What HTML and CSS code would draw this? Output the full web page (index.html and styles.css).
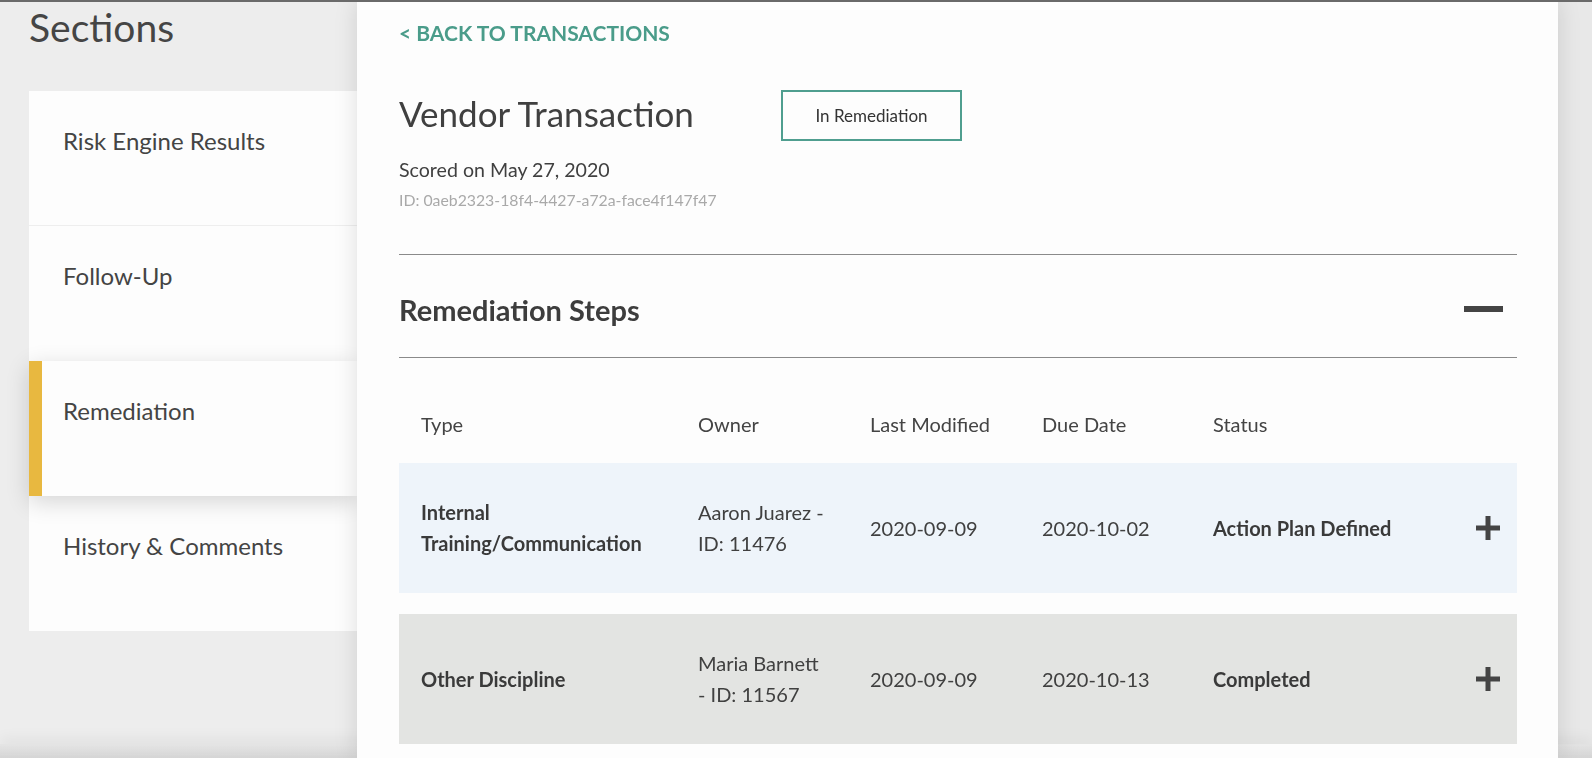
FILE: index.html
```html
<!DOCTYPE html>
<html lang="en">
<head>
<meta charset="utf-8">
<title>Vendor Transaction</title>
<link rel="stylesheet" href="styles.css">
</head>
<body>
<div class="page">
  <aside class="sidebar">
    <h2 class="sidebar-title">Sections</h2>
    <nav class="nav">
      <div class="nav-item divider">Risk Engine Results</div>
      <div class="nav-item">Follow-Up</div>
      <div class="nav-item active">Remediation</div>
      <div class="nav-item">History &amp; Comments</div>
    </nav>
  </aside>
  <main class="main">
    <a class="back-link">&lt; Back to Transactions</a>
    <div class="head-row">
      <h1 class="title">Vendor Transaction</h1>
      <div class="badge">In Remediation</div>
    </div>
    <div class="scored">Scored on May 27, 2020</div>
    <div class="txid">ID: 0aeb2323-18f4-4427-a72a-face4f147f47</div>
    <section class="section">
      <div class="section-head">
        <h3 class="section-title">Remediation Steps</h3>
        <svg class="minus" width="39" height="6" viewBox="0 0 39 6"><rect x="0" y="0" width="39" height="6" fill="#444"/></svg>
      </div>
      <div class="table">
        <div class="thead">
          <div>Type</div>
          <div>Owner</div>
          <div>Last Modified</div>
          <div>Due Date</div>
          <div>Status</div>
          <div></div>
        </div>
        <div class="trow blue">
          <div class="strong">Internal<br>Training/Communication</div>
          <div>Aaron Juarez -<br>ID: 11476</div>
          <div>2020-09-09</div>
          <div>2020-10-02</div>
          <div class="strong">Action Plan Defined</div>
          <svg class="plus" width="24" height="24" viewBox="0 0 24 24"><rect x="0" y="9.5" width="24" height="5" fill="#444"/><rect x="9.5" y="0" width="5" height="24" fill="#444"/></svg>
        </div>
        <div class="trow gray">
          <div class="strong">Other Discipline</div>
          <div>Maria Barnett<br>- ID: 11567</div>
          <div>2020-09-09</div>
          <div>2020-10-13</div>
          <div class="strong">Completed</div>
          <svg class="plus" width="24" height="24" viewBox="0 0 24 24"><rect x="0" y="9.5" width="24" height="5" fill="#444"/><rect x="9.5" y="0" width="5" height="24" fill="#444"/></svg>
        </div>
      </div>
    </section>
  </main>
  <div class="rail"></div>
</div>
<div class="footer-shade"></div>
</body>
</html>
```

FILE: styles.css
```css
* { box-sizing: border-box; }
html, body { margin: 0; padding: 0; }
body {
  font-family: Lato, "Open Sans", "Noto Sans", sans-serif;
  color: #444;
  background: #ededed;
  border-top: 2px solid #6a6a6a;
  height: 100vh;
  overflow: hidden;
}
.page {
  display: flex;
  height: 100%;
}
.sidebar {
  width: 357px;
  flex: none;
  background: #ededed;
  padding: 2px 0 0 29px;
}
.sidebar-title {
  margin: 0;
  font-size: 39px;
  font-weight: 400;
  line-height: 47px;
  color: #454545;
}
.nav {
  margin-top: 40px;
  display: flex;
  flex-direction: column;
}
.nav-item {
  height: 135px;
  background: #fdfdfd;
  padding: 35px 0 0 34px;
  font-size: 24px;
  line-height: 29px;
  color: #444;
}
.nav-item.divider { border-bottom: 1px solid #eeeeee; }
.nav-item.active {
  position: relative;
  z-index: 1;
  border-left: 13px solid #e8b840;
  padding-left: 21px;
  box-shadow: 0 6px 22px rgba(0,0,0,0.16);
}
.main {
  width: 1201px;
  flex: none;
  background: #fdfdfd;
  padding: 20px 41px 0 42px;
  position: relative;
  z-index: 2;
  box-shadow: 0 0 22px rgba(0,0,0,0.13);
}
.back-link {
  display: block;
  font-size: 21px;
  line-height: 24px;
  font-weight: 700;
  text-transform: uppercase;
  color: #4a9c8a;
  margin-top: -1px;
}
.head-row {
  display: flex;
  align-items: flex-start;
  margin-top: 45px;
}
.title {
  margin: 2px 0 0 0;
  width: 382px;
  font-size: 35px;
  font-weight: 400;
  line-height: 42px;
  color: #404040;
}
.badge {
  width: 181px;
  height: 51px;
  border: 2px solid #4f9e8f;
  display: flex;
  align-items: center;
  justify-content: center;
  font-size: 17px;
  color: #333;
}
.scored {
  margin-top: 17px;
  font-size: 19.6px;
  line-height: 24px;
  color: #404040;
}
.txid {
  margin-top: 8px;
  font-size: 15.8px;
  line-height: 20px;
  color: #a9a9a9;
}
.section {
  margin-top: 44px;
  border-top: 1px solid #8a8a8a;
}
.section-head {
  height: 103px;
  display: flex;
  align-items: center;
  justify-content: space-between;
  padding: 8px 14px 0 0;
  border-bottom: 1px solid #8a8a8a;
}
.section-title {
  margin: 0;
  font-size: 29px;
  font-weight: 700;
  line-height: 34px;
  color: #3d3d3d;
}
.minus { display: block; margin-top: -2px; }
.thead, .trow {
  display: grid;
  grid-template-columns: 277px 172px 172px 171px 1fr 24px;
  align-items: center;
  padding: 0 17px 0 22px;
}
.thead {
  padding-top: 52px;
  padding-bottom: 25px;
  font-size: 20px;
  line-height: 28px;
  color: #444;
}
.trow {
  height: 130px;
  font-size: 20px;
  line-height: 31px;
  color: #404040;
}
.trow + .trow { margin-top: 21px; }
.trow.blue { background: #eef4fa; }
.trow.gray { background: #e3e4e2; }
.strong {
  font-weight: 700;
  font-size: 20px;
  color: #3a3a3a;
}
.plus { display: block; }
.rail {
  flex: 1;
  background: #e8e8e8;
}
.footer-shade {
  position: fixed;
  left: 0;
  right: 0;
  bottom: 0;
  height: 14px;
  background: linear-gradient(rgba(225,225,225,0.7), rgba(210,210,210,0.9));
  box-shadow: 0 -6px 14px rgba(0,0,0,0.05);
}
```
